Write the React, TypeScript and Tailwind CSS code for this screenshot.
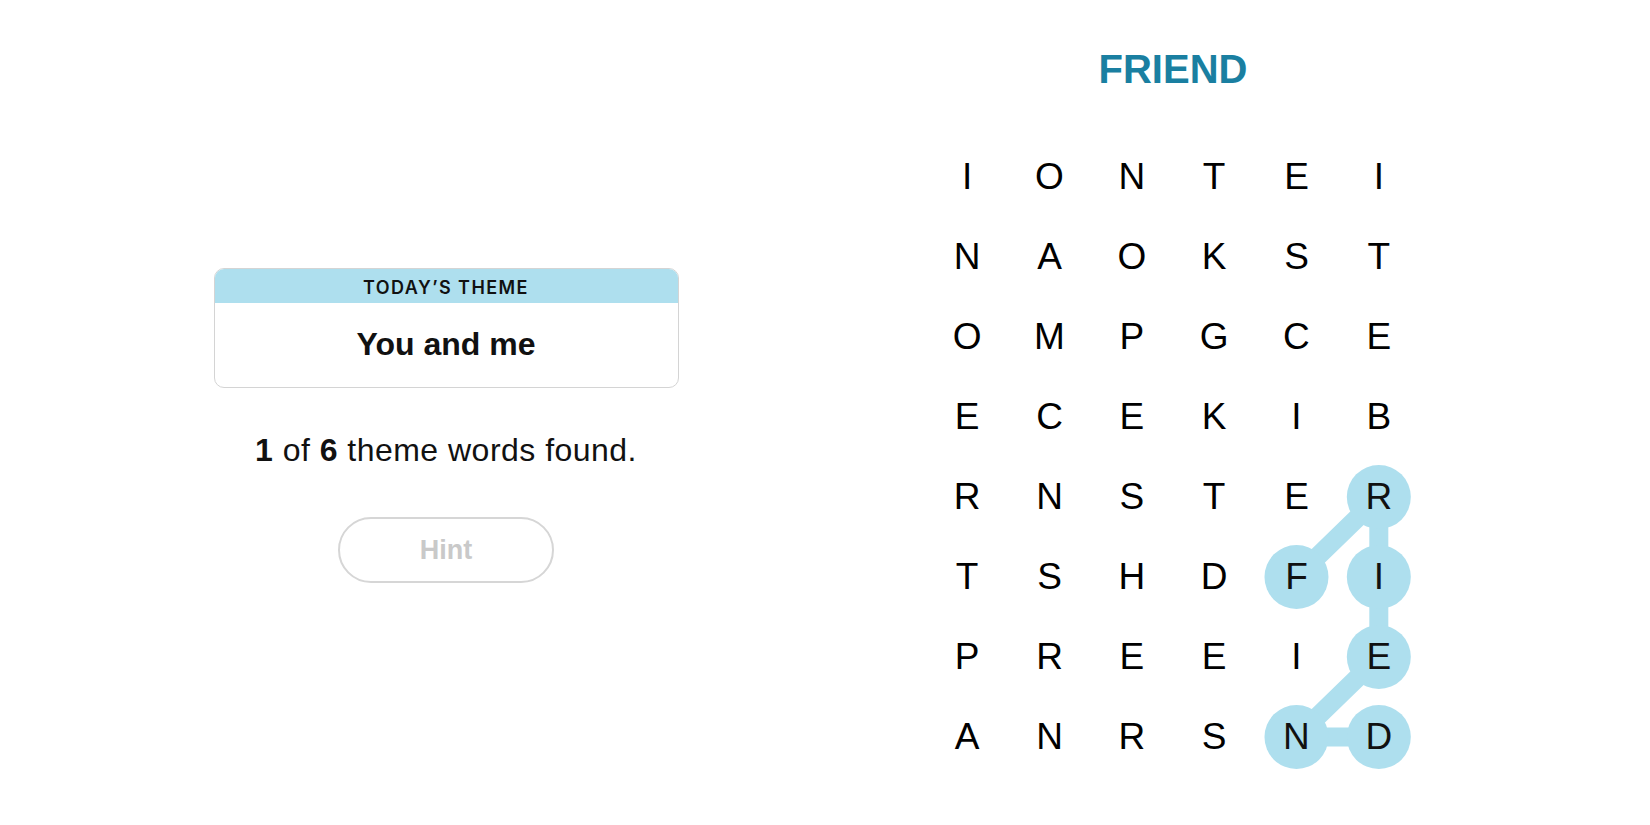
import React from 'react';

const GRID = [
  'IONTEI',
  'NAOKST',
  'OMPGCE',
  'ECEKIB',
  'RNSTER',
  'TSHDFI',
  'PREEIE',
  'ANRSND',
];

const CELL_W = 82.33;
const CELL_H = 80;

// found word path, [col, row]
const FOUND: [number, number][] = [
  [4, 5],
  [5, 4],
  [5, 5],
  [5, 6],
  [4, 7],
  [5, 7],
];

const isFound = (c: number, r: number) => FOUND.some(([fc, fr]) => fc === c && fr === r);

const center = ([c, r]: [number, number]) => ({ x: c * CELL_W + CELL_W / 2, y: r * CELL_H + CELL_H / 2 });

const FONT = { fontFamily: '"Liberation Sans", Arial, sans-serif' };

function ThemeCard() {
  return (
    <div className="w-[465px] overflow-hidden rounded-[10px] border border-[#d4d4d4]">
      <div className="flex h-[34px] items-center justify-center bg-[#aedfee] pt-[2px] font-['Inter',sans-serif] text-[18px] font-semibold tracking-[0.08em] text-[#111]">
        TODAY’S THEME
      </div>
      <div className="flex h-[84px] items-center justify-center pb-[2px] text-[32px] font-bold text-[#111]">
        You and me
      </div>
    </div>
  );
}

function Board() {
  return (
    <div className="relative" style={{ width: CELL_W * 6, height: CELL_H * 8 }}>
      <svg className="absolute inset-0" width={CELL_W * 6} height={CELL_H * 8}>
        <polyline
          points={FOUND.map((p) => {
            const { x, y } = center(p);
            return `${x},${y}`;
          }).join(' ')}
          fill="none"
          stroke="#aedfee"
          strokeWidth={19}
          strokeLinejoin="round"
        />
        {FOUND.map((p, i) => {
          const { x, y } = center(p);
          return <circle key={i} cx={x} cy={y} r={32} fill="#aedfee" />;
        })}
      </svg>
      <div className="relative grid grid-cols-6">
        {GRID.map((row, r) =>
          row.split('').map((ch, c) => (
            <div
              key={`${r}-${c}`}
              className={`flex h-[80px] items-center justify-center text-[37px] ${isFound(c, r) ? 'text-[#111]' : 'text-black'}`}
            >
              {ch}
            </div>
          ))
        )}
      </div>
    </div>
  );
}

export default function App() {
  return (
    <div className="flex h-[825px] w-[1650px] bg-white" style={FONT}>
      <div className="flex w-[892px] flex-col items-center pt-[268px]">
        <ThemeCard />
        <p className="mt-[38px] text-[32px] leading-[48px] tracking-[0.015em] text-[#111]">
          <span className="font-bold">1</span> of <span className="font-bold">6</span> theme words found.
        </p>
        <button className="mt-[43px] flex h-[66px] w-[216px] items-center justify-center rounded-full border-2 border-[#d6d6d6] text-[27px] font-bold text-[#c9c9c9]">
          Hint
        </button>
      </div>
      <div className="ml-[34px] flex flex-col items-center">
        <h1 className="mt-[46px] text-[40px] font-semibold leading-[46px] text-[#1a7fa1]">FRIEND</h1>
        <div className="mt-[45px]">
          <Board />
        </div>
      </div>
    </div>
  );
}
